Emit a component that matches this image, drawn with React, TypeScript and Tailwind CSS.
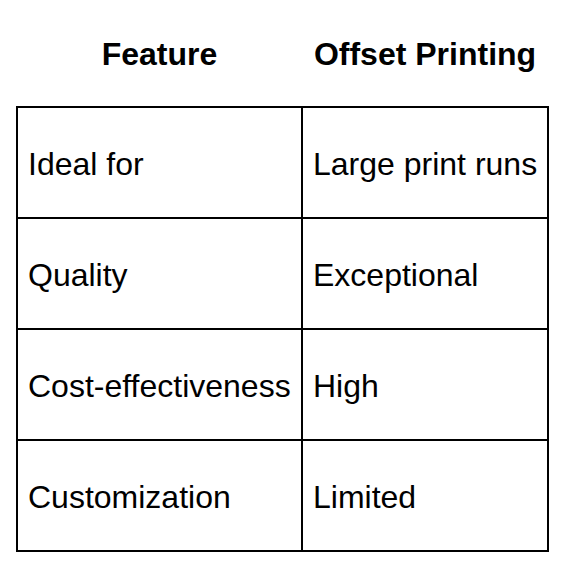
const rows = [
  { feature: 'Ideal for', offset: 'Large print runs' },
  { feature: 'Quality', offset: 'Exceptional' },
  { feature: 'Cost-effectiveness', offset: 'High' },
  { feature: 'Customization', offset: 'Limited' },
];

export default function App() {
  return (
    <div className="min-h-screen bg-white pl-4 font-['Liberation_Sans',Arial,sans-serif] text-black">
      <table className="w-[531px] table-fixed border-collapse text-[32px] leading-[37px]">
        <colgroup>
          <col className="w-[285px]" />
          <col className="w-[246px]" />
        </colgroup>
        <thead>
          <tr>
            <th className="h-[107px] pt-[3px] text-center font-bold">Feature</th>
            <th className="h-[107px] pt-[3px] text-center font-bold">Offset Printing</th>
          </tr>
        </thead>
        <tbody>
          {rows.map((row) => (
            <tr key={row.feature}>
              <td className="h-[111px] whitespace-nowrap border-2 border-black pl-[10px] pt-[3px] text-left font-normal">
                {row.feature}
              </td>
              <td className="h-[111px] whitespace-nowrap border-2 border-black pl-[10px] pt-[3px] text-left font-normal">
                {row.offset}
              </td>
            </tr>
          ))}
        </tbody>
      </table>
    </div>
  );
}
